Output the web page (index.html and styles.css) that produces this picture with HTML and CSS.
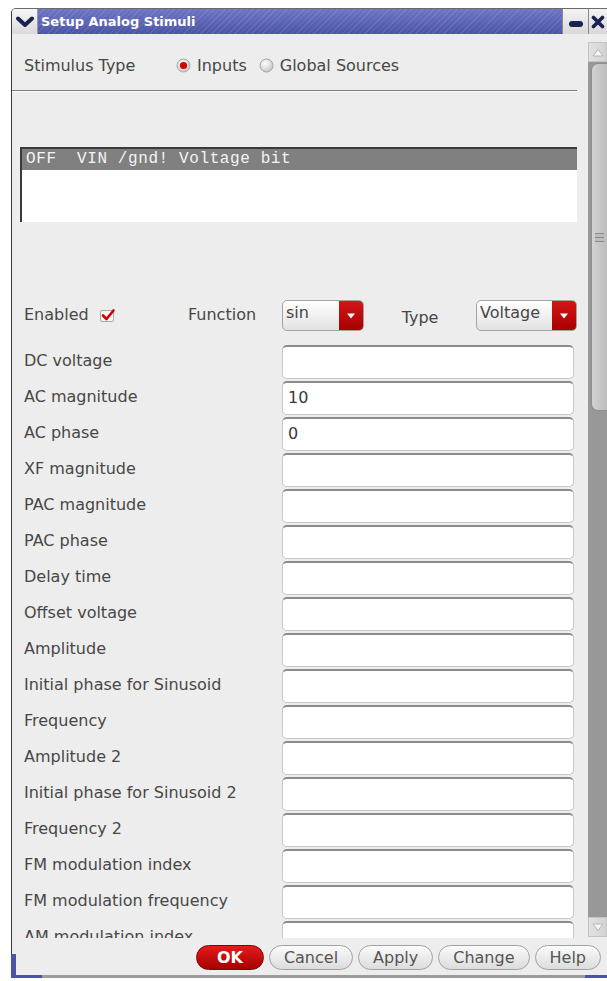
FILE: index.html
```html
<!DOCTYPE html>
<html>
<head>
<meta charset="utf-8">
<title>Setup Analog Stimuli</title>
<link rel="stylesheet" href="styles.css">
</head>
<body>
<div class="window">
  <div class="titlebar">
    <div class="tb-menu">
      <svg width="20" height="12" viewBox="0 0 20 12"><path d="M3 2.5 L10 9 L17 2.5" fill="none" stroke="#1b2150" stroke-width="4" stroke-linecap="round" stroke-linejoin="round"/></svg>
    </div>
    <div class="tb-title">Setup Analog Stimuli</div>
    <div class="tb-btn"><span class="min-bar"></span></div>
    <div class="tb-btn tb-close">
      <svg width="14" height="14" viewBox="0 0 14 14"><path d="M2.5 2.5 L11.5 11.5 M11.5 2.5 L2.5 11.5" stroke="#1b2150" stroke-width="3.6" stroke-linecap="round"/></svg>
    </div>
  </div>

  <div class="body">
    <div class="scroll">
      <div class="form">
        <div class="stim-row">
          <span class="stim-label">Stimulus Type</span>
          <svg class="radio" width="15" height="15" viewBox="0 0 15 15">
            <defs><radialGradient id="rg1" cx="40%" cy="35%" r="70%"><stop offset="0" stop-color="#ffffff"/><stop offset="1" stop-color="#c4c4c4"/></radialGradient></defs>
            <circle cx="7.5" cy="7.5" r="6.5" fill="url(#rg1)" stroke="#a8a8a8"/>
            <circle cx="7.5" cy="7.5" r="3.6" fill="#d00000"/>
          </svg>
          <span class="radio-text">Inputs</span>
          <svg class="radio second" width="15" height="15" viewBox="0 0 15 15">
            <circle cx="7.5" cy="7.5" r="6.5" fill="url(#rg1)" stroke="#a8a8a8"/>
          </svg>
          <span class="radio-text">Global Sources</span>
        </div>
        <div class="sep"></div>

        <div class="listbox">
          <div class="list-item selected">OFF  VIN /gnd! Voltage bit</div>
        </div>

        <div class="ctrl-row">
          <div class="enabled">
            <span>Enabled</span>
            <svg class="check" width="18" height="16" viewBox="0 0 18 16">
              <rect x="1.5" y="3.5" width="13" height="11" rx="1.5" fill="#f4f4f4" stroke="#a8a8a8"/>
              <path d="M4 8.5 L7.5 12 L14.5 3.5" fill="none" stroke="#d00000" stroke-width="2.6" stroke-linecap="round" stroke-linejoin="round"/>
            </svg>
          </div>
          <span class="fn-label">Function</span>
          <div class="combo combo-fn">
            <span class="combo-text">sin</span>
            <span class="combo-arrow"><svg width="10" height="6" viewBox="0 0 10 6"><path d="M1 0.5 L9 0.5 L5 5.5 Z" fill="#fff"/></svg></span>
          </div>
          <span class="type-label">Type</span>
          <div class="combo combo-type">
            <span class="combo-text">Voltage</span>
            <span class="combo-arrow"><svg width="10" height="6" viewBox="0 0 10 6"><path d="M1 0.5 L9 0.5 L5 5.5 Z" fill="#fff"/></svg></span>
          </div>
        </div>

        <div class="fields">
          <div class="field"><span class="field-label">DC voltage</span><div class="entry"></div></div>
          <div class="field"><span class="field-label">AC magnitude</span><div class="entry">10</div></div>
          <div class="field"><span class="field-label">AC phase</span><div class="entry">0</div></div>
          <div class="field"><span class="field-label">XF magnitude</span><div class="entry"></div></div>
          <div class="field"><span class="field-label">PAC magnitude</span><div class="entry"></div></div>
          <div class="field"><span class="field-label">PAC phase</span><div class="entry"></div></div>
          <div class="field"><span class="field-label">Delay time</span><div class="entry"></div></div>
          <div class="field"><span class="field-label">Offset voltage</span><div class="entry"></div></div>
          <div class="field"><span class="field-label">Amplitude</span><div class="entry"></div></div>
          <div class="field"><span class="field-label">Initial phase for Sinusoid</span><div class="entry"></div></div>
          <div class="field"><span class="field-label">Frequency</span><div class="entry"></div></div>
          <div class="field"><span class="field-label">Amplitude 2</span><div class="entry"></div></div>
          <div class="field"><span class="field-label">Initial phase for Sinusoid 2</span><div class="entry"></div></div>
          <div class="field"><span class="field-label">Frequency 2</span><div class="entry"></div></div>
          <div class="field"><span class="field-label">FM modulation index</span><div class="entry"></div></div>
          <div class="field"><span class="field-label">FM modulation frequency</span><div class="entry"></div></div>
          <div class="field"><span class="field-label">AM modulation index</span><div class="entry"></div></div>
        </div>
      </div>

      <div class="vscroll">
        <div class="sb-btn">
          <svg width="12" height="9" viewBox="0 0 12 9"><path d="M1 8 L6 1.5 L11 8 Z" fill="#f6f6f6" stroke="#b4b4b4" stroke-linejoin="round"/></svg>
        </div>
        <div class="sb-track">
          <div class="sb-thumb"><span class="grip"></span></div>
        </div>
        <div class="sb-btn">
          <svg width="12" height="9" viewBox="0 0 12 9"><path d="M1 1 L6 7.5 L11 1 Z" fill="#f6f6f6" stroke="#b4b4b4" stroke-linejoin="round"/></svg>
        </div>
      </div>
    </div>

    <div class="actions">
      <button class="btn btn-ok">OK</button>
      <button class="btn">Cancel</button>
      <button class="btn">Apply</button>
      <button class="btn">Change</button>
      <button class="btn">Help</button>
    </div>
  </div>

  <span class="resize resize-left"></span>
  <span class="resize resize-right"></span>
</div>
</body>
</html>
```

FILE: styles.css
```css
body {
  margin: 0;
  background: #ffffff;
  font-family: "DejaVu Sans", "Bitstream Vera Sans", sans-serif;
  color: #474747;
}

.window {
  position: relative;
  margin: 8px 0 0 11px;
  width: 595px;
  height: 966px;
  background: #ededed;
  border-left: 1px solid #3a3a3a;
  border-top: 1px solid #6a6a6a;
  border-bottom: 3px solid #9c9c9c;
  border-top-left-radius: 5px;
  display: flex;
  flex-direction: column;
}

/* ---------- title bar ---------- */
.titlebar {
  height: 25px;
  display: flex;
  flex: none;
}

.tb-menu {
  width: 25px;
  border-right: 1px solid #9a9a9a;
  background: linear-gradient(#f6f6f6, #dadada);
  display: flex;
  align-items: center;
  justify-content: center;
  border-top-left-radius: 4px;
}

.tb-title {
  flex: 1;
  padding-left: 3px;
  line-height: 25px;
  font-size: 13px;
  font-weight: bold;
  color: #ffffff;
  background:
    repeating-linear-gradient(135deg, rgba(255, 255, 255, 0.10) 0 1px, rgba(255, 255, 255, 0) 1px 4px),
    linear-gradient(#6d75c6, #4b53a4);
}

.tb-btn {
  width: 25px;
  border-left: 1px solid #8a8a8a;
  background: linear-gradient(#f4f4f4, #d8d8d8);
  display: flex;
  align-items: center;
  justify-content: center;
}

.tb-close {
  width: 18px;
}

.min-bar {
  width: 14px;
  height: 6px;
  margin-top: 5px;
  border-radius: 3px;
  background: #1b2150;
}

/* ---------- body ---------- */
.body {
  flex: 1;
  display: flex;
  flex-direction: column;
}

.scroll {
  height: 904px;
  display: flex;
  flex: none;
  overflow: hidden;
}

.form {
  width: 564px;
  padding-left: 12px;
  font-size: 16px;
  color: #474747;
  overflow: hidden;
}

.stim-row {
  margin-top: 16px;
  height: 30px;
  display: flex;
  align-items: center;
}

.stim-label {
  width: 152px;
}

.radio {
  flex: none;
  margin-right: 6px;
}

.radio.second {
  margin-left: 12px;
}

.sep {
  margin: 10px 11px 0 -12px;
  height: 1px;
  background: #7a7a7a;
  border-bottom: 1px solid #fbfbfb;
}

.listbox {
  margin: 55px 11px 0 -4px;
  height: 73px;
  background: #ffffff;
  border-top: 2px solid #3a3a3a;
  border-left: 2px solid #3a3a3a;
}

.list-item {
  height: 21px;
  line-height: 21px;
  padding-left: 4px;
  font-family: "Liberation Mono", "DejaVu Sans Mono", monospace;
  font-size: 16px;
  letter-spacing: 0.6px;
  white-space: pre;
}

.list-item.selected {
  background: #808080;
  color: #f4f4f4;
}

/* ---------- function / type row ---------- */
.ctrl-row {
  margin-top: 78px;
  height: 31px;
  display: flex;
  align-items: center;
}

.enabled {
  width: 164px;
  display: flex;
  align-items: center;
  padding-bottom: 2px;
}

.check {
  margin-left: 10px;
}

.fn-label {
  width: 94px;
  padding-bottom: 2px;
}

.type-label {
  width: 112px;
  text-align: center;
  padding-top: 4px;
}

.combo {
  height: 31px;
  box-sizing: border-box;
  display: flex;
  border: 1px solid #a4a4a4;
  border-radius: 5px;
  background: linear-gradient(#ffffff, #e2e2e2);
  overflow: hidden;
}

.combo-fn {
  width: 82px;
}

.combo-type {
  width: 101px;
}

.combo-text {
  flex: 1;
  padding: 2px 0 0 3px;
  line-height: 20px;
}

.combo-arrow {
  width: 24px;
  background: linear-gradient(#d41616, #a80000);
  display: flex;
  align-items: center;
  justify-content: center;
}

/* ---------- value entries ---------- */
.fields {
  margin-top: 14px;
  display: flex;
  flex-direction: column;
  gap: 2px;
}

.field {
  height: 34px;
  flex: none;
  display: flex;
  align-items: center;
}

.field-label {
  width: 258px;
  padding-bottom: 4px;
  white-space: nowrap;
}

.entry {
  width: 292px;
  height: 34px;
  box-sizing: border-box;
  padding: 0 0 2px 5px;
  display: flex;
  align-items: center;
  background: #ffffff;
  border: 1px solid #c8c8c8;
  border-top: 2px solid #8c8c8c;
  border-radius: 5px;
  color: #3a3a3a;
}

/* ---------- vertical scrollbar ---------- */
.vscroll {
  width: 19px;
  flex: none;
  display: flex;
  flex-direction: column;
  padding: 8px 0 1px;
  box-sizing: border-box;
  background: #ededed;
}

.sb-btn {
  height: 20px;
  flex: none;
  box-sizing: border-box;
  background: linear-gradient(90deg, #e2e2e2, #d2d2d2);
  border: 1px solid #c4c4c4;
  display: flex;
  align-items: center;
  justify-content: center;
}

.sb-track {
  flex: 1;
  background: #989898;
  padding-left: 3px;
}

.sb-thumb {
  height: 346px;
  margin-top: 1px;
  background: linear-gradient(90deg, #d2d2d2, #bcbcbc);
  border: 1px solid #8e8e8e;
  border-right: none;
  border-radius: 7px 0 0 7px;
  display: flex;
  align-items: center;
  justify-content: center;
}

.grip {
  width: 9px;
  height: 7px;
  border-top: 1px solid #8a8a8a;
  border-bottom: 1px solid #8a8a8a;
  background: linear-gradient(#bcbcbc 0 3px, #8a8a8a 3px 4px, #bcbcbc 4px);
}

/* ---------- dialog buttons ---------- */
.actions {
  flex: 1;
  display: flex;
  justify-content: flex-end;
  align-items: flex-start;
  gap: 5px;
  padding: 7px 6px 0 0;
}

.btn {
  height: 25px;
  padding: 0 14px;
  border: 1px solid #a2a2a2;
  border-radius: 13px;
  background: linear-gradient(#fbfbfb, #dcdcdc);
  font-family: "DejaVu Sans", sans-serif;
  font-size: 16px;
  color: #555555;
  line-height: 22px;
}

.btn-ok {
  padding: 0 20px;
  border-color: #8a0000;
  background: linear-gradient(#e41c1c, #a60000);
  color: #ffffff;
  font-weight: bold;
}

/* ---------- resize corners of the frame ---------- */
.resize {
  position: absolute;
  bottom: -3px;
  background: #4b53a8;
}

.resize-left {
  left: -1px;
  width: 31px;
  height: 24px;
  background: none;
  border-left: 5px solid #4b53a8;
  border-bottom: 3px solid #4b53a8;
  box-sizing: border-box;
}

.resize-right {
  right: 0;
  width: 22px;
  height: 3px;
}
```
